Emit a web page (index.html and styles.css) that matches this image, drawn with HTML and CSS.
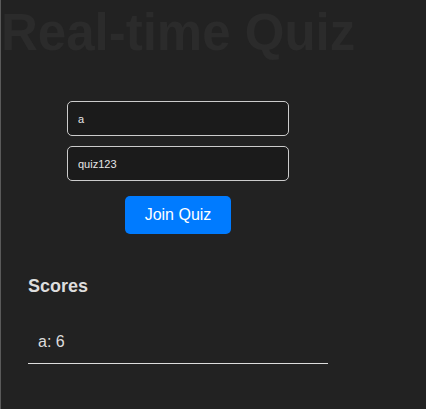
FILE: index.html
```html
<!DOCTYPE html>
<html>
<head>
<meta charset="utf-8">
<link rel="stylesheet" href="styles.css">
</head>
<body>
<div class="app">
  <h1 class="title">Real-time Quiz</h1>
  <div class="join">
    <input class="field" type="text" value="a">
    <input class="field" type="text" value="quiz123">
    <button class="btn">Join Quiz</button>
  </div>
  <section class="scores">
    <h2 class="scores-title">Scores</h2>
    <ul class="score-list">
      <li class="score-item">a: 6</li>
    </ul>
  </section>
</div>
</body>
</html>
```

FILE: styles.css
```css
html, body {
  margin: 0;
  padding: 0;
  height: 100%;
}
body {
  background: #222222;
  border-left: 1px solid #5a5a5a;
  box-sizing: border-box;
  font-family: "Liberation Sans", Arial, sans-serif;
  color: #dddddd;
}
.app {
  width: 354px;
  display: flex;
  flex-direction: column;
}
.title {
  margin: 5px 0 0 0;
  font-size: 51px;
  font-weight: bold;
  color: #2b2b2b;
  line-height: 55px;
  white-space: nowrap;
}
.join {
  margin-top: 41px;
  display: flex;
  flex-direction: column;
  align-items: center;
  gap: 10px;
}
.field {
  width: 222px;
  height: 35px;
  box-sizing: border-box;
  background: #1b1b1b;
  border: 1px solid #cccccc;
  border-radius: 5px;
  padding: 0 10px;
  color: #e6e6e6;
  font-family: "Liberation Sans", Arial, sans-serif;
  font-size: 11px;
  outline: none;
}
.btn {
  margin-top: 5px;
  background: #007bff;
  color: #ffffff;
  border: none;
  border-radius: 5px;
  padding: 10px 20px;
  font-family: "Liberation Sans", Arial, sans-serif;
  font-size: 16px;
}
.scores {
  margin: 42px 0 0 27px;
  width: 300px;
}
.scores-title {
  margin: 0;
  font-size: 18px;
  font-weight: bold;
  color: #dddddd;
}
.score-list {
  list-style: none;
  margin: 24px 0 0;
  padding: 0;
}
.score-item {
  padding: 12px 10px 12px;
  border-bottom: 1px solid #dddddd;
  font-size: 16px;
  color: #dddddd;
}
```
